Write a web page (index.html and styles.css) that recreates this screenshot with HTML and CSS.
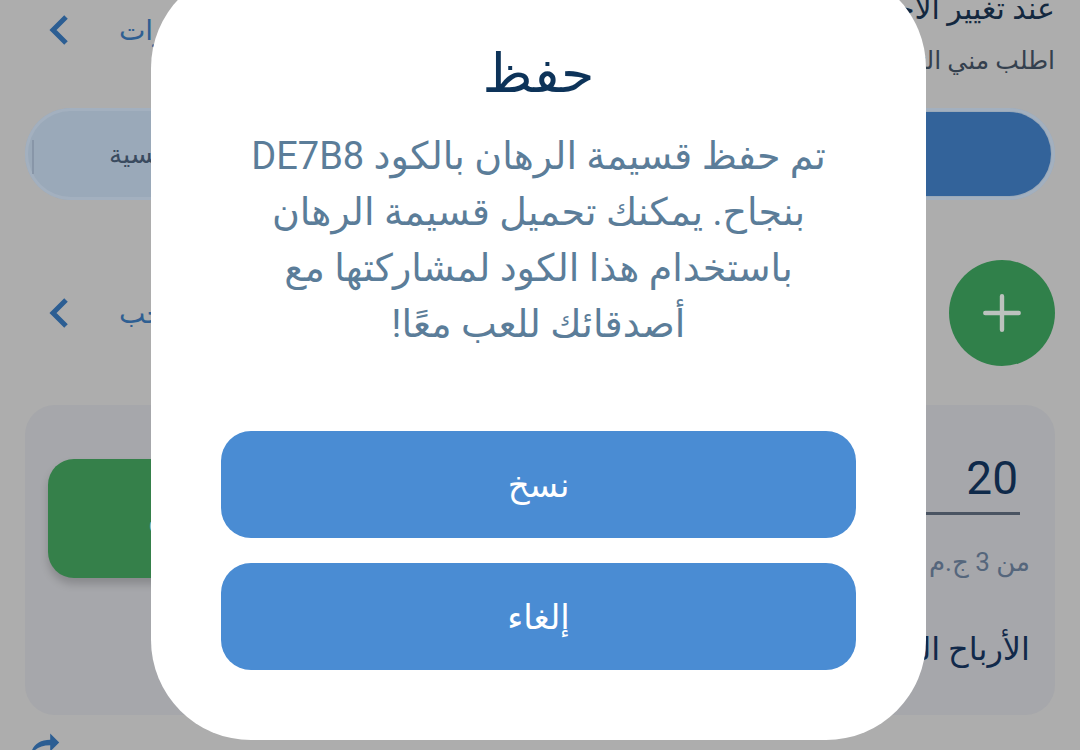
FILE: index.html
```html
<!DOCTYPE html>
<html lang="ar" dir="rtl">
<head>
    <meta charset="UTF-8">
    <meta name="viewport" content="width=device-width, initial-scale=1.0">
    <title>قسيمة الرهان</title>
    <link rel="stylesheet" href="styles.css">
</head>
<body>
    <div class="page">
        <div class="setting">
            <div class="setting-text">
                <div class="setting-title">عند تغيير الاحتمالات</div>
                <div class="setting-sub">اطلب مني التأكيد</div>
            </div>
            <div class="setting-value">
                <span>كل التغييرات</span>
                <svg class="chevron" viewBox="0 0 24 34"><polyline points="19,4 6,17 19,30"/></svg>
            </div>
        </div>

        <div class="tabs">
            <div class="tab active">عادية</div>
            <div class="tab"></div>
            <div class="tab">الرئيسية</div>
        </div>

        <div class="row">
            <div class="fab">
                <svg viewBox="0 0 50 50"><path d="M25 6v38M6 25h38"/></svg>
            </div>
            <div class="setting-value">
                <span>السحب</span>
                <svg class="chevron" viewBox="0 0 24 34"><polyline points="19,4 6,17 19,30"/></svg>
            </div>
        </div>

        <div class="card">
            <div class="stake">
                <div class="stake-input">20</div>
                <div class="stake-min">من 3 ج.م</div>
                <div class="stake-win">الأرباح المحتملة</div>
            </div>
            <button class="place-bet">ضع الرهان</button>
        </div>

        <div class="footer">
            <svg class="share" viewBox="0 0 40 30"><path d="M6 28c2-10 10-15 22-15v7l10-10L28 0v7C14 7 6 15 6 28z"/></svg>
        </div>
    </div>

    <div class="dialog">
        <h1>حفظ</h1>
        <p>تم حفظ قسيمة الرهان بالكود DE7B8<br>بنجاح. يمكنك تحميل قسيمة الرهان<br>باستخدام هذا الكود لمشاركتها مع<br>أصدقائك للعب معًا!</p>
        <div class="actions">
            <button>نسخ</button>
            <button>إلغاء</button>
        </div>
    </div>
</body>
</html>
```

FILE: styles.css
```css
body {
    margin: 0;
    width: 1080px;
    height: 750px;
    overflow: hidden;
    background-color: #adadad;
    font-family: Roboto, "DejaVu Sans", sans-serif;
}

/* page behind the dialog, already dimmed */
.page {
    padding: 0 25px;
}
.setting {
    display: flex;
    justify-content: space-between;
    align-items: center;
    margin-top: -32px;
    height: 130px;
}
.setting-title {
    font-size: 30px;
    color: #13283f;
}
.setting-sub {
    margin-top: 20px;
    font-size: 25px;
    color: #34404e;
}
.setting-value {
    display: flex;
    align-items: center;
    gap: 48px;
    font-size: 28px;
    color: #2f5f92;
    padding-left: 22px;
}
.setting .setting-value {
    margin-top: -6px;
}
.chevron {
    width: 24px;
    height: 34px;
    fill: none;
    stroke: #2c5e93;
    stroke-width: 5;
}

.tabs {
    display: flex;
    height: 84px;
    margin-top: 10px;
    padding: 4px;
    border-radius: 46px;
    background-color: #9aa9b9;
    box-shadow: inset 0 0 0 3px #a3b0bf;
    position: relative;
}
.tabs::after {
    content: "";
    position: absolute;
    left: 7px;
    top: 32px;
    width: 2px;
    height: 34px;
    background-color: #8896a8;
}
.tab {
    flex: 1;
    display: flex;
    align-items: center;
    justify-content: center;
    font-size: 26px;
    color: #3a4b5f;
    border-radius: 42px;
}
.tab:last-child {
    justify-content: flex-end;
    padding-left: 80px;
}
.tab.active {
    background-color: #33639a;
    color: #c9d3df;
}

.row {
    display: flex;
    justify-content: space-between;
    align-items: center;
    margin-top: 60px;
}
.fab {
    width: 106px;
    height: 106px;
    border-radius: 50%;
    background-color: #30804a;
    display: flex;
    align-items: center;
    justify-content: center;
}
.fab svg {
    width: 44px;
    height: 44px;
    fill: none;
    stroke: #bcc2be;
    stroke-width: 5;
    stroke-linecap: round;
}

.card {
    display: flex;
    justify-content: space-between;
    margin-top: 39px;
    height: 310px;
    border-radius: 30px;
    background-color: #a6a7ab;
    padding: 54px 25px 0 23px;
    box-sizing: border-box;
}
.stake {
    width: 260px;
}
.stake-input {
    margin: -5px 10px 0 0;
    padding: 0 2px 0 0;
    height: 58px;
    font-size: 46px;
    line-height: 48px;
    color: #0f2a4a;
    border-bottom: 3px solid #4a5462;
}
.stake-min {
    margin-top: 32px;
    font-size: 26px;
    color: #55667c;
}
.stake-win {
    margin-top: 53px;
    font-size: 32px;
    color: #11294a;
}
.place-bet {
    width: 330px;
    height: 119px;
    border: none;
    border-radius: 26px;
    background-color: #35804a;
    color: #c2cbc4;
    font-family: inherit;
    font-size: 30px;
    box-shadow: 0 6px 8px rgba(0, 0, 0, 0.18);
}

.footer {
    padding: 18px 13px 0 0;
    display: flex;
    justify-content: flex-end;
}
.share {
    width: 36px;
    height: 28px;
    fill: #2c5e93;
}

/* save dialog */
.dialog {
    position: fixed;
    left: 151px;
    top: -32px;
    width: 775px;
    height: 772px;
    box-sizing: border-box;
    background-color: #ffffff;
    border-radius: 100px;
    padding-top: 66px;
    text-align: center;
}
.dialog h1 {
    margin: 0;
    font-size: 54px;
    font-weight: normal;
    line-height: 80px;
    color: #0d3359;
}
.dialog p {
    margin: 14px 0 0;
    font-size: 38px;
    line-height: 56px;
    color: #5b7d99;
}
.actions {
    display: flex;
    flex-direction: column;
    gap: 25px;
    margin: 79px 70px 0;
}
.actions button {
    height: 107px;
    border: none;
    border-radius: 30px;
    background-color: #4a8cd3;
    color: #ffffff;
    font-family: inherit;
    font-size: 34px;
}
```
